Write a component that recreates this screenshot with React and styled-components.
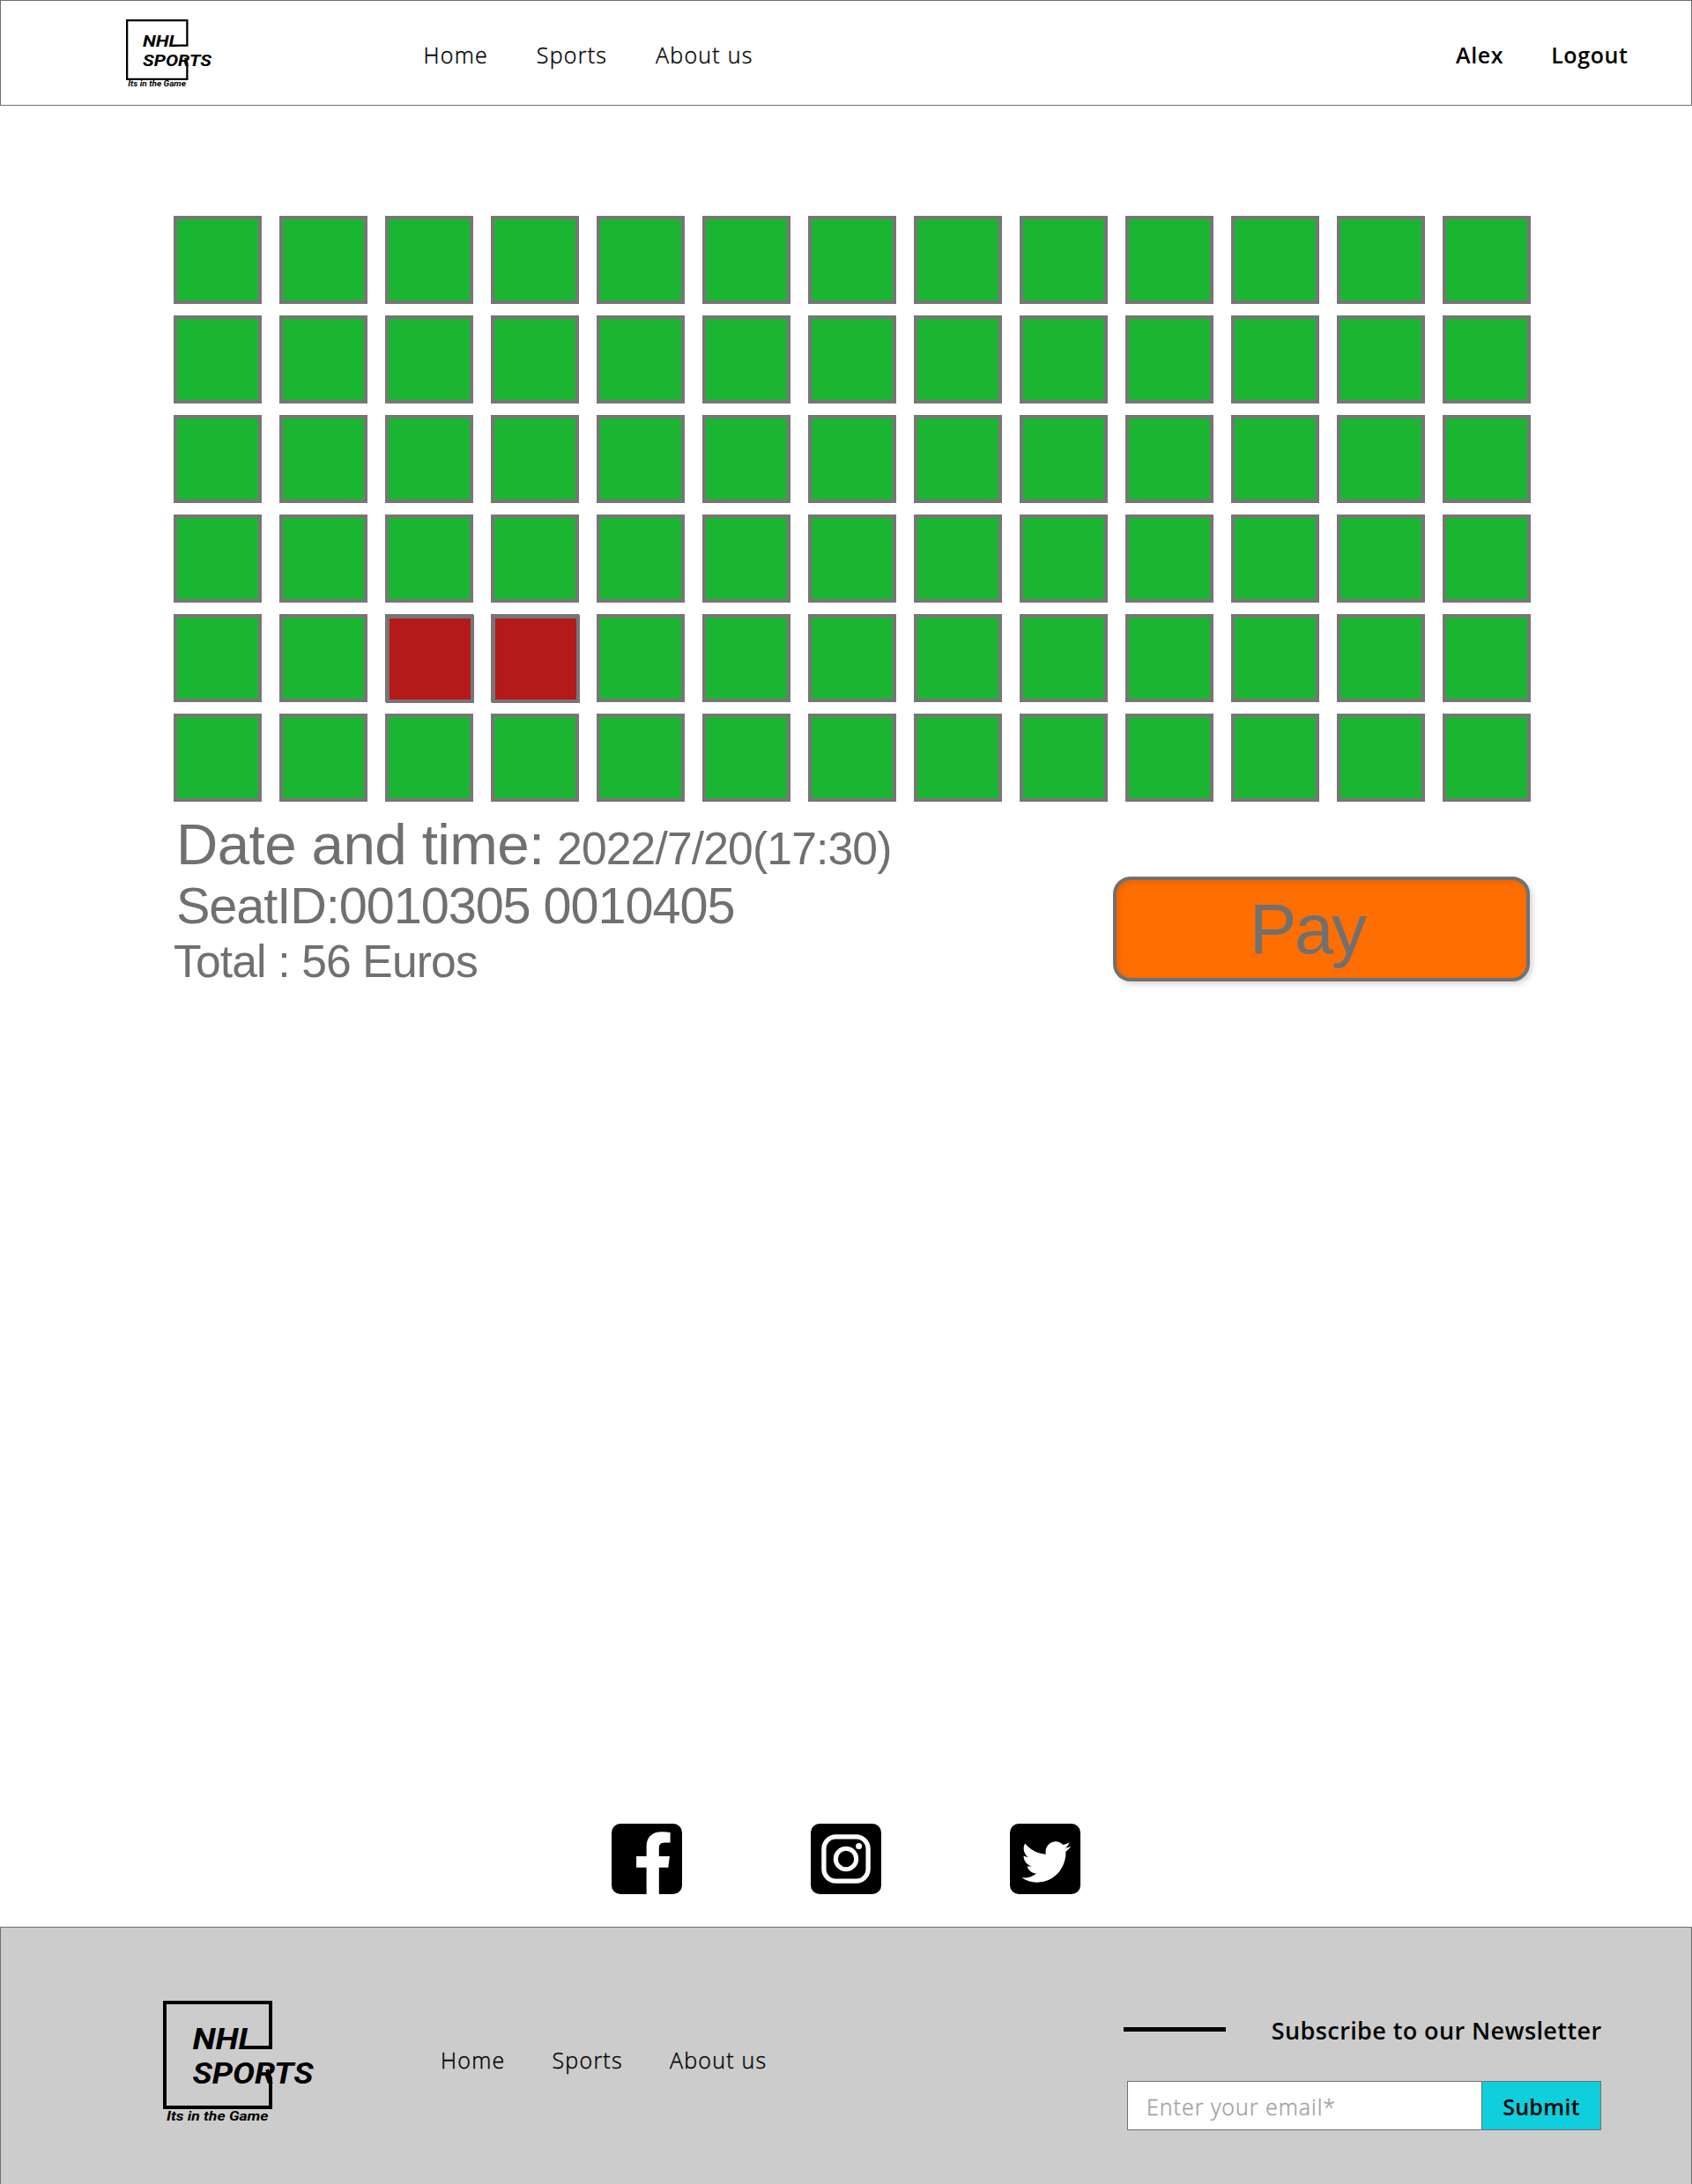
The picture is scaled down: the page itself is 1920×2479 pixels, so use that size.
import React from "react";
import styled, { createGlobalStyle, css } from "styled-components";

const GlobalStyle = createGlobalStyle`
  * { box-sizing: border-box; }
  body { margin: 0; background: #fff; }
`;

const uiFont = css`
  font-family: "Open Sans", "Noto Sans", sans-serif;
  font-size: 25px;
  line-height: 34px;
  color: #000;
  white-space: nowrap;
`;

const Page = styled.div`
  width: 1920px;
  height: 2479px;
  display: flex;
  flex-direction: column;
  overflow: hidden;
`;

const Header = styled.header`
  height: 120px;
  flex: none;
  border: 1px solid #707070;
  display: flex;
  align-items: flex-start;
  padding: 21px 71.5px 0 142px;
`;

const LogoSvg = styled.svg`
  flex: none;
  display: block;
  overflow: visible;
  font-family: Roboto, "Open Sans", sans-serif;
  font-style: italic;
  font-weight: 700;
`;

const Nav = styled.nav`
  display: flex;
  gap: ${(p) => p.$gap}px;
  margin-left: ${(p) => p.$left}px;
  margin-top: ${(p) => p.$top}px;
`;

const NavLink = styled.a`
  ${uiFont}
  letter-spacing: ${(p) => (p.$strong ? 0.6 : 1.25)}px;
  font-weight: ${(p) => (p.$strong ? 600 : 300)};
  -webkit-text-stroke: ${(p) => (p.$strong ? 0 : 0.4)}px currentColor;
`;

const Account = styled.div`
  display: flex;
  gap: 54px;
  margin-left: auto;
  margin-top: 23px;
`;

const Main = styled.main`
  flex: 1;
  padding: 125px 185px 0 197px;
`;

const SeatGrid = styled.div`
  display: grid;
  grid-template-columns: repeat(13, 100px);
  grid-auto-rows: 100px;
  gap: 13px 20px;
`;

const Seat = styled.div`
  border: 4px solid #767676;
  background: #1bb631;
`;

const TakenMark = styled.div`
  width: 100px;
  height: 100px;
  margin: -3px 0 0 -3px;
  border: 4px solid #767676;
  background: #b51a1a;
`;

const Summary = styled.section`
  display: flex;
  justify-content: space-between;
  align-items: flex-start;
  padding-top: 19px;
`;

const Details = styled.div`
  font-family: "Liberation Sans", Arial, sans-serif;
  color: #707070;
`;

const Line = styled.div`
  display: flex;
  align-items: baseline;
  height: 60px;
  line-height: 60px;
  white-space: pre;
  font-size: ${(p) => p.$size}px;
  letter-spacing: ${(p) => p.$track}px;
  margin-left: ${(p) => p.$indent || 0}px;
  margin-bottom: ${(p) => p.$after || 0}px;
`;

const When = styled.span`
  font-size: 51.6px;
  letter-spacing: -0.85px;
  margin-left: 14.5px;
`;

const PayButton = styled.button`
  width: 473px;
  height: 119px;
  margin: 66px -1px 0 0;
  padding: 0 0 0 151px;
  text-align: left;
  border: 4px solid #707070;
  border-radius: 20px;
  background: #ff6e00;
  box-shadow: 3px 3px 6px rgba(0, 0, 0, 0.16), inset 3px 3px 6px rgba(0, 0, 0, 0.08);
  color: #707070;
  font: 80px/109px "Liberation Sans", Arial, sans-serif;
  letter-spacing: -2.4px;
`;

const Socials = styled.div`
  flex: none;
  display: flex;
  justify-content: center;
  gap: 146px;
  padding-bottom: 37px;
`;

const SocialSvg = styled.svg`
  width: 80px;
  height: 80px;
  display: block;
`;

const Footer = styled.footer`
  flex: none;
  height: 292px;
  border: 1px solid #707070;
  border-bottom: 0;
  background: #ccc;
  display: flex;
  align-items: flex-start;
  padding: 83px 101.5px 0 184px;
`;

const Newsletter = styled.div`
  margin-left: auto;
  width: 542.5px;
  margin-top: 16px;
`;

const NewsHead = styled.div`
  display: flex;
  align-items: center;
  justify-content: space-between;
  height: 36px;
`;

const Rule = styled.div`
  width: 116px;
  height: 5px;
  margin-top: -4px;
  background: #000;
`;

const NewsTitle = styled.div`
  ${uiFont}
  font-size: 27px;
  font-weight: 600;
  letter-spacing: 0.4px;
`;

const Form = styled.div`
  display: flex;
  margin: 39px 0 0 4px;
`;

const Email = styled.input`
  ${uiFont}
  width: 403px;
  height: 56px;
  padding: 2px 0 0 21px;
  border: 1px solid #707070;
  border-radius: 0;
  background: #fff;
  font-weight: 300;
  letter-spacing: 1px;
  &::placeholder {
    color: #a0a0a0;
    opacity: 1;
    -webkit-text-stroke: 0.4px #a0a0a0;
  }
`;

const Submit = styled.button`
  ${uiFont}
  width: 136px;
  height: 56px;
  margin-left: -1px;
  padding: 2px 0 0;
  border: 1px solid #707070;
  background: #0fcedd;
  font-weight: 600;
  letter-spacing: 0.3px;
`;

function Logo({ width, height }) {
  return (
    <LogoSvg width={width} height={height} viewBox="0 0 124 123" preserveAspectRatio="none">
      <path d="M92 53H122V2H2V121H122V88L118 78" fill="none" stroke="#000" strokeWidth="4" />
      <text x="33.5" y="55.3" fontSize="33.5" textLength="72" lengthAdjust="spacingAndGlyphs">NHL</text>
      <text x="33.5" y="93.6" fontSize="33.5" textLength="137" lengthAdjust="spacingAndGlyphs">SPORTS</text>
      <text x="4" y="136.3" fontSize="14.5" textLength="115.5" lengthAdjust="spacingAndGlyphs">Its in the Game</text>
    </LogoSvg>
  );
}

function Facebook() {
  return (
    <SocialSvg viewBox="0 0 80 80">
      <rect width="80" height="80" rx="10" />
      <path fill="#fff" d="M39.6 80V49.7H28.1V37H39.6V26C39.6 15 46.5 9.3 56.2 9.3C60.5 9.3 64.5 9.6 66.6 10V21.5H60.4C55 21.5 53.8 24.3 53.8 28.2V37H65.9L64.3 49.7H53.8V80Z" />
    </SocialSvg>
  );
}

function Instagram() {
  return (
    <SocialSvg viewBox="0 0 80 80">
      <rect width="80" height="80" rx="10" />
      <g fill="none" stroke="#fff">
        <rect x="14.9" y="14.9" width="50.2" height="50.2" rx="13.5" strokeWidth="5.3" />
        <circle cx="40" cy="40" r="11.7" strokeWidth="5.1" />
      </g>
      <circle cx="54.6" cy="25.4" r="3.5" fill="#fff" />
    </SocialSvg>
  );
}

function Twitter() {
  return (
    <SocialSvg viewBox="0 0 80 80">
      <rect width="80" height="80" rx="10" />
      <path
        fill="#fff"
        transform="translate(13.3 14.9) scale(.109 .1115)"
        d="M459.37 151.716c.325 4.548.325 9.097.325 13.645 0 138.72-105.583 298.558-298.558 298.558-59.452 0-114.68-17.219-161.137-47.106 8.447.974 16.568 1.299 25.34 1.299 49.055 0 94.213-16.568 130.274-44.832-46.132-.975-84.792-31.188-98.112-72.772 6.498.974 12.995 1.624 19.818 1.624 9.421 0 18.843-1.3 27.614-3.573-48.081-9.747-84.143-51.98-84.143-102.985v-1.299c13.969 7.797 30.214 12.67 47.431 13.319-28.264-18.843-46.781-51.005-46.781-87.391 0-19.492 5.197-37.36 14.294-52.954 51.655 63.675 129.3 105.258 216.365 109.807-1.624-7.797-2.599-15.918-2.599-24.04 0-57.828 46.782-104.934 104.934-104.934 30.213 0 57.502 12.67 76.67 33.137 23.715-4.548 46.456-13.32 66.599-25.34-7.798 24.366-24.366 44.833-46.132 57.827 21.117-2.273 41.584-8.122 60.426-16.243-14.292 20.791-32.161 39.308-52.628 54.253z"
      />
    </SocialSvg>
  );
}

const links = ["Home", "Sports", "About us"];
const taken = new Set([54, 55]);

export default function App() {
  return (
    <Page>
      <GlobalStyle />
      <Header>
        <Logo width={70.5} height={69} />
        <Nav $gap={54.8} $left={267} $top={23}>
          {links.map((l) => <NavLink key={l}>{l}</NavLink>)}
        </Nav>
        <Account>
          <NavLink $strong>Alex</NavLink>
          <NavLink $strong>Logout</NavLink>
        </Account>
      </Header>
      <Main>
        <SeatGrid>
          {Array.from({ length: 78 }, (_, i) => (
            <Seat key={i}>{taken.has(i) && <TakenMark />}</Seat>
          ))}
        </SeatGrid>
        <Summary>
          <Details>
            <Line $size={65.5} $track={-0.6} $indent={3} $after={9}>
              Date and time:<When>2022/7/20(17:30)</When>
            </Line>
            <Line $size={57.6} $track={-1.05} $indent={3} $after={3}>SeatID:0010305 0010405</Line>
            <Line $size={51.6} $track={-0.85}>Total : 56 Euros</Line>
          </Details>
          <PayButton>Pay</PayButton>
        </Summary>
      </Main>
      <Socials>
        <Facebook />
        <Instagram />
        <Twitter />
      </Socials>
      <Footer>
        <Logo width={124} height={123} />
        <Nav $gap={53} $left={191} $top={50}>
          {links.map((l) => <NavLink key={l}>{l}</NavLink>)}
        </Nav>
        <Newsletter>
          <NewsHead>
            <Rule />
            <NewsTitle>Subscribe to our Newsletter</NewsTitle>
          </NewsHead>
          <Form>
            <Email placeholder="Enter your email*" />
            <Submit>Submit</Submit>
          </Form>
        </Newsletter>
      </Footer>
    </Page>
  );
}
